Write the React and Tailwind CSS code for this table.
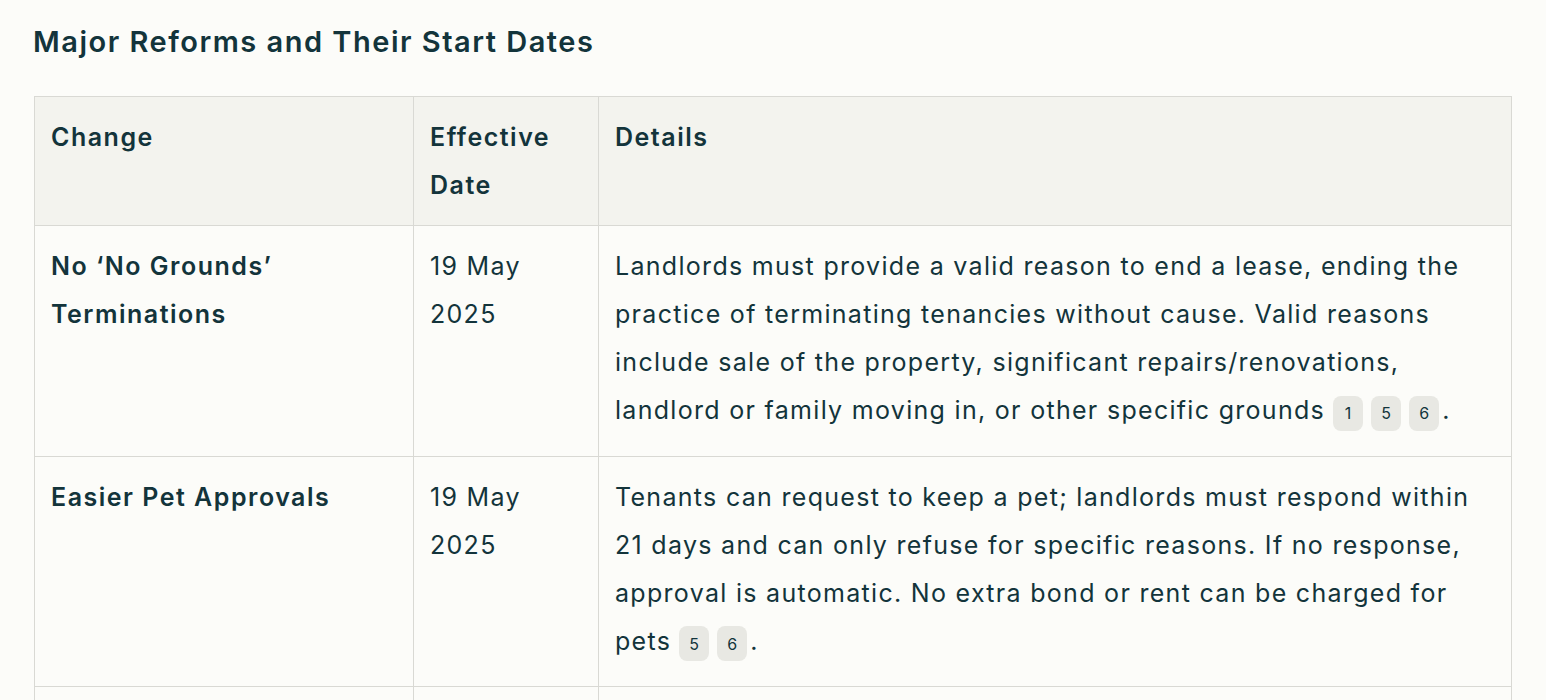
import React from "react";

const Cite = ({ n }) => (
	<span className="inline-flex items-center justify-center align-baseline ml-[8px] mb-[9px] w-[30px] h-[35px] rounded-lg bg-[#e8e8e3] text-[16px] leading-none tracking-normal text-[#13343b] font-['Inter',sans-serif]">
		{n}
	</span>
);

const rows = [
	{
		change: "No \u2018No Grounds\u2019 Terminations",
		date: "19 May 2025",
		details: "Landlords must provide a valid reason to end a lease, ending the practice of terminating tenancies without cause. Valid reasons include sale of the property, significant repairs/renovations, landlord or family moving in, or other specific grounds",
		cites: [1, 5, 6],
	},
	{
		change: "Easier Pet Approvals",
		date: "19 May 2025",
		details: "Tenants can request to keep a pet; landlords must respond within 21 days and can only refuse for specific reasons. If no response, approval is automatic. No extra bond or rent can be charged for pets",
		cites: [5, 6],
	},
	{
		change: "Rent Increase Limits",
		date: "19 May 2025",
		details: "Rent can only be increased once every 12 months, including for periodic and fixed-term agreements, with at least 60 days written notice",
		cites: [1, 6],
	},
];

export default function App() {
	return (
		<div className="min-h-screen bg-[#fcfcf9] text-[#13343b] font-['Inter',sans-serif] pl-[33px] pr-[33px] pt-[22px]">
			<h2 className="text-[29px] font-semibold leading-[40px] tracking-[1.5px] mb-[34px]">
				Major Reforms and Their Start Dates
			</h2>
			<table className="ml-px w-[1478px] table-fixed border-collapse text-[25px] leading-[48px] tracking-[1.3px]">
				<thead>
					<tr className="bg-[#f3f3ee]">
						<th className="w-[379px] border border-[#d9d9d4] p-4 text-left align-top font-semibold tracking-[1.5px]">Change</th>
						<th className="w-[185px] border border-[#d9d9d4] p-4 text-left align-top font-semibold tracking-[1.5px]">Effective Date</th>
						<th className="border border-[#d9d9d4] p-4 text-left align-top font-semibold tracking-[1.5px]">Details</th>
					</tr>
				</thead>
				<tbody>
					{rows.map((r, i) => (
						<tr key={i}>
							<td className="border border-[#d9d9d4] p-4 align-top font-semibold tracking-[1.5px]">{r.change}</td>
							<td className="border border-[#d9d9d4] p-4 align-top">{r.date}</td>
							<td className="border border-[#d9d9d4] p-4 align-top">
								{r.details}
								{r.cites.map((c) => (
									<Cite key={c} n={c} />
								))}
								<span className="ml-[3px]">.</span>
							</td>
						</tr>
					))}
				</tbody>
			</table>
		</div>
	);
}
